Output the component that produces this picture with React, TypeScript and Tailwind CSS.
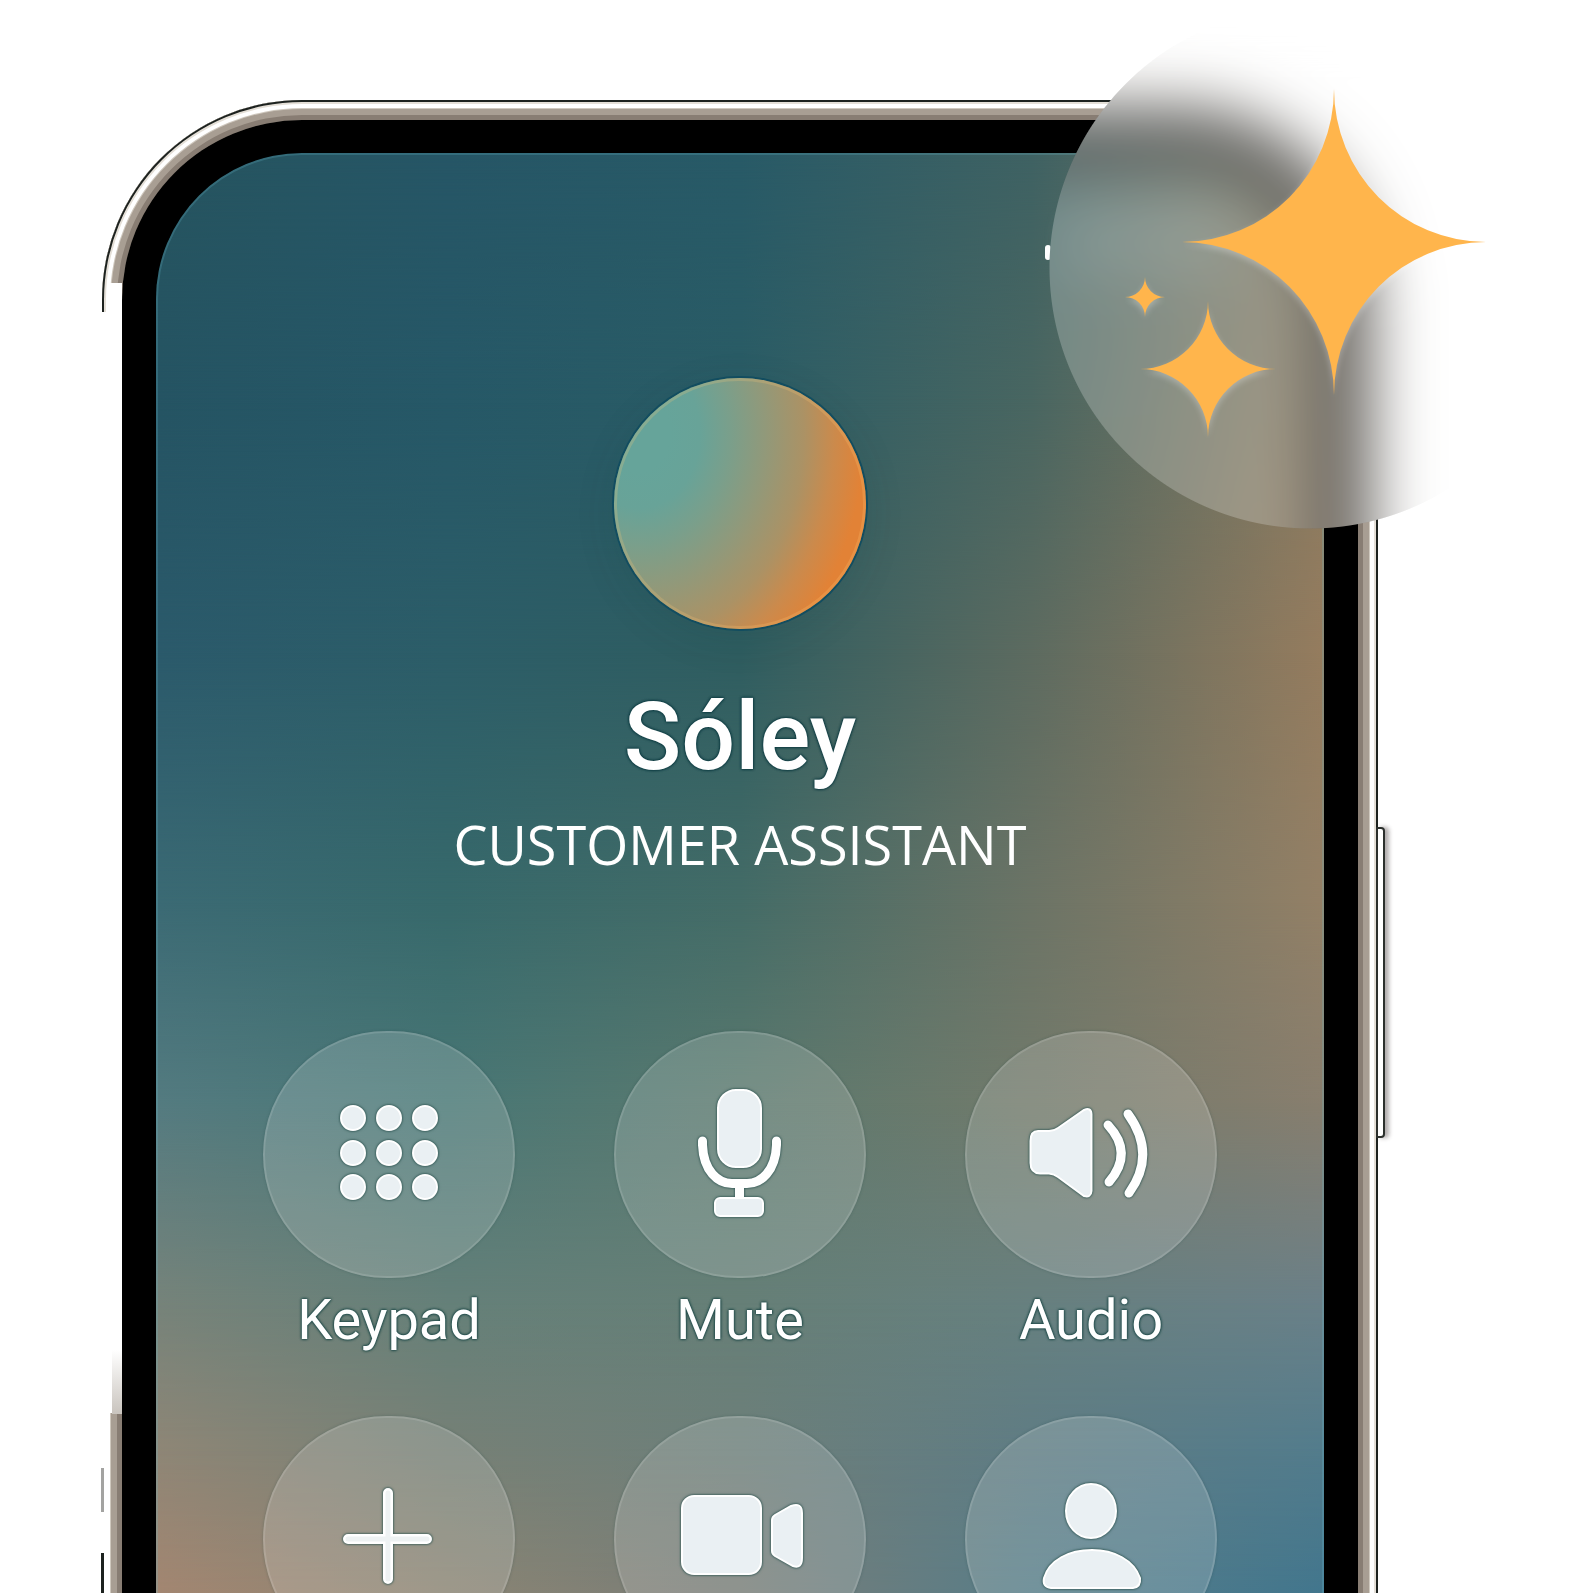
import type { ReactNode } from "react";

/* Each band fades in over the one above it, giving a soft two-way colour mesh. */
const bands = [
  "bg-[linear-gradient(90deg,#26545f,#265666,#285a67,#3f6263,#7e7660)]",
  "bg-[linear-gradient(90deg,#255463,#265867,#2a5c65,#496661,#8a7a60)] [mask-image:linear-gradient(to_bottom,transparent_0px,black_250px)]",
  "bg-[linear-gradient(90deg,#2b5a6b,#2c5d68,#2f5d60,#5d6b60,#957c5e)] [mask-image:linear-gradient(to_bottom,transparent_250px,black_500px)]",
  "bg-[linear-gradient(90deg,#3b6a74,#37696b,#446c67,#6c7466,#938066)] [mask-image:linear-gradient(to_bottom,transparent_500px,black_750px)]",
  "bg-[linear-gradient(90deg,#547b80,#497775,#5b796e,#727a6b,#887e6e)] [mask-image:linear-gradient(to_bottom,transparent_750px,black_950px)]",
  "bg-[linear-gradient(90deg,#76837a,#658079,#667f77,#67807f,#6a8088)] [mask-image:linear-gradient(to_bottom,transparent_950px,black_1150px)]",
  "bg-[linear-gradient(90deg,#8e8676,#768076,#6d7f7a,#5f7c84,#537c8c)] [mask-image:linear-gradient(to_bottom,transparent_1150px,black_1296px)]",
  "bg-[linear-gradient(90deg,#a38671,#8a8473,#787d78,#577d88,#42768d)] [mask-image:linear-gradient(to_bottom,transparent_1296px,black_1439px)]",
];

function Glyph({ children }: { children: ReactNode }) {
  return (
    <svg
      viewBox="0 0 252 247"
      aria-hidden="true"
      className="size-full fill-[#eaf0f3] stroke-white stroke-2 [filter:drop-shadow(0_0_1px_#2f5552)_drop-shadow(0_0_1px_#2f555299)]"
    >
      {children}
    </svg>
  );
}

const dots = [87, 122, 156].flatMap((y) => [90, 126, 162].map((x) => ({ x, y })));

const actions: { name: string; label?: boolean; icon: ReactNode }[] = [
  {
    name: "Keypad",
    label: true,
    icon: (
      <Glyph>
        {dots.map((d) => (
          <circle key={`${d.x}-${d.y}`} cx={d.x} cy={d.y} r="12" />
        ))}
      </Glyph>
    ),
  },
  {
    name: "Mute",
    label: true,
    icon: (
      <Glyph>
        <rect x="104" y="59" width="43" height="77" rx="18" />
        <path
          d="M88.500 110 V114 C89.500 140 104 152.500 118 152.500 H133 C147 152.500 161.500 140 162.500 114 V110"
          fill="none"
          strokeWidth="9"
          strokeLinecap="round"
        />
        <path d="M125.500 153 V170" fill="none" strokeWidth="9" />
        <rect x="101" y="167" width="48" height="18" rx="5" />
      </Glyph>
    ),
  },
  {
    name: "Audio",
    label: true,
    icon: (
      <Glyph>
        <path d="M73 100 H84 Q89 100 93 97 L119 79 Q126 76 126.500 83 V160 Q126 167 119 165 L93 146 Q89 143 84 142.500 H75 Q65.500 142 65.500 132 V110 Q65.500 100 73 100 Z" />
        <path d="M143 94 Q169 122 144 151" fill="none" strokeWidth="9" strokeLinecap="round" />
        <path d="M163 83 Q192 123 164 162" fill="none" strokeWidth="9" strokeLinecap="round" />
      </Glyph>
    ),
  },
  {
    name: "Add call",
    icon: (
      <Glyph>
        <path d="M125 77 V163 M85 123 H164" fill="none" strokeWidth="10" strokeLinecap="round" />
        <path d="M125 77 V163 M85 123 H164" fill="none" stroke="#eef2f3" strokeWidth="5" strokeLinecap="round" />
      </Glyph>
    ),
  },
  {
    name: "Video",
    icon: (
      <Glyph>
        <rect x="68" y="80" width="79" height="78" rx="12" />
        <path d="M158 104 Q158 101 161 99 L177 90 Q188 86 188 97 V142 Q188 153 179 150 L161 140 Q158 138 158 135 Z" />
      </Glyph>
    ),
  },
  {
    name: "Contact",
    icon: (
      <Glyph>
        <ellipse cx="126" cy="95" rx="25" ry="27" />
        <path d="M86 172 Q77 171 79 162 C84 144 104 134 127 134 C149 134 169 144 175 162 Q176 171 168 172 Z" />
      </Glyph>
    ),
  },
];

function Action({ name, label, icon }: { name: string; label?: boolean; icon: ReactNode }) {
  return (
    <button type="button" aria-label={name} className="flex w-[252px] flex-col items-center gap-[10px]">
      <span className="block h-[247px] w-full rounded-full bg-white/17 shadow-[inset_0_0_0_2px_rgba(255,255,255,0.12),0_0_3px_rgba(20,60,60,0.25)]">
        {icon}
      </span>
      {label && (
        <span className="font-['Roboto',sans-serif] text-[56px] leading-[64px] text-white [text-shadow:0_0_2px_#1f4a49,0_0_3px_#1f4a49,0_0_3px_#1f4a49]">
          {name}
        </span>
      )}
    </button>
  );
}

function StatusIcons() {
  return (
    <svg viewBox="0 0 190 44" aria-hidden="true" className="h-[44px] w-[190px] overflow-visible fill-[#d3ebf2]">
      <rect x="1" y="26" width="6" height="15" rx="3" fill="white" />
      <g className="opacity-40 blur-[14px]">
        <rect x="28" y="5" width="36" height="35" />
        <path d="M70 17 Q96 -5 120 17 L96 42 Z" />
        <rect x="124" y="8" width="58" height="30" rx="8" />
      </g>
    </svg>
  );
}

function Sparkles() {
  return (
    <svg
      viewBox="0 0 522 522"
      aria-hidden="true"
      className="relative size-full fill-[#ffb54c] [filter:drop-shadow(0_3px_3px_rgba(255,255,255,0.3))]"
    >
      <path d="M285 82 A152 153 0 0 0 437 235 A152 153 0 0 0 285 388 A152 153 0 0 0 133 235 A152 153 0 0 0 285 82 Z" />
      <path d="M159 294 A68 68 0 0 0 227 362 A68 68 0 0 0 159 430 A68 68 0 0 0 91 362 A68 68 0 0 0 159 294 Z" />
      <path d="M96 270 A20 20 0 0 0 116 290 A20 20 0 0 0 96 310 A20 20 0 0 0 76 290 A20 20 0 0 0 96 270 Z" />
    </svg>
  );
}

export default function App() {
  return (
    <main className="relative h-screen overflow-hidden bg-white pt-[100px] pr-[194px] pl-[102px]">
      <section
        aria-label="Call"
        className="relative rounded-t-[200px] bg-[#a89d91] p-[20px] shadow-[inset_0_0_0_2px_#1d221f,inset_0_0_0_4px_#e4dfd7,inset_0_0_0_8px_#ffffff,inset_0_0_0_9px_#cfc8be,inset_0_0_0_15px_#a89e93,inset_0_0_0_20px_#887d73]"
      >
        <div className="rounded-t-[180px] bg-black px-[34px] pt-[33px]">
          <div className="relative isolate flex flex-col items-center overflow-hidden rounded-t-[146px]">
            {bands.map((band) => (
              <div key={band} className={`absolute inset-0 -z-10 ${band}`} />
            ))}
            <div className="pointer-events-none absolute inset-0 rounded-t-[146px] shadow-[inset_0_0_0_2px_rgba(110,190,210,0.22)]" />

            <header className="flex h-[225px] w-full justify-end pt-[66px] pr-[90px]">
              <StatusIcons />
            </header>

            <div className="h-[251px] w-[252px] rounded-full bg-[radial-gradient(86%_107%_at_10%_22%,#66a49a_14%,#68a398_28%,#7a9f8b_42%,#91997a_58%,#ab9265_76%,#cb8a4c_90%,#e28236_104%)] shadow-[inset_0_0_0_3px_rgba(255,200,120,0.22),0_0_0_2px_#124d60,0_10px_40px_rgba(20,60,60,0.12)]" />

            <h1 className="mt-[60px] font-['Roboto',sans-serif] text-[95px] leading-[96px] font-medium text-white [text-shadow:0_0_2px_#0c3a40,0_0_3px_#0c3a40,0_0_3px_#0c3a40]">
              Sóley
            </h1>
            <p className="mt-[27px] font-['Open_Sans',sans-serif] text-[54px] leading-[64px] whitespace-nowrap text-white">
              CUSTOMER ASSISTANT
            </p>

            <div className="mt-[155px] grid w-full grid-cols-[repeat(3,252px)] justify-between gap-y-[64px] px-[107px]">
              {actions.map((a) => (
                <Action key={a.name} {...a} />
              ))}
            </div>
          </div>
        </div>

        {/* Overexposed stretch of the left rail */}
        <div className="absolute top-[183px] left-[7px] h-[1130px] w-[13px] bg-white" />
        <div className="absolute top-[212px] left-0 h-[1060px] w-[19px] bg-white" />
        <div className="absolute top-[212px] bottom-0 left-0 w-[8px] bg-white" />
        <div className="absolute top-[1250px] left-[10px] h-[64px] w-[10px] bg-linear-to-b from-white to-[#c9c4be]" />
        <div className="absolute top-[1368px] -left-[1px] h-[44px] w-[3px] bg-[#a3a3a1]" />
        <div className="absolute top-[1453px] bottom-0 -left-[1px] w-[3px] bg-[#1d221f]" />

        {/* Side key */}
        <div className="absolute top-[727px] -right-[7px] h-[311px] w-[9px] rounded-r-[4px] border-2 border-[#2b2f2c] bg-white shadow-[4px_0_4px_rgba(60,50,50,0.4)]" />
      </section>

      {/* Frosted badge: the blur layer overhangs the circle so its edge stays evenly soft */}
      <div className="absolute top-[7px] right-[1px] size-[522px]">
        <div className="absolute -inset-[100px] bg-white/23 backdrop-blur-[32px] [mask-image:radial-gradient(circle,black_260px,transparent_261px)]" />
        <Sparkles />
      </div>
    </main>
  );
}
